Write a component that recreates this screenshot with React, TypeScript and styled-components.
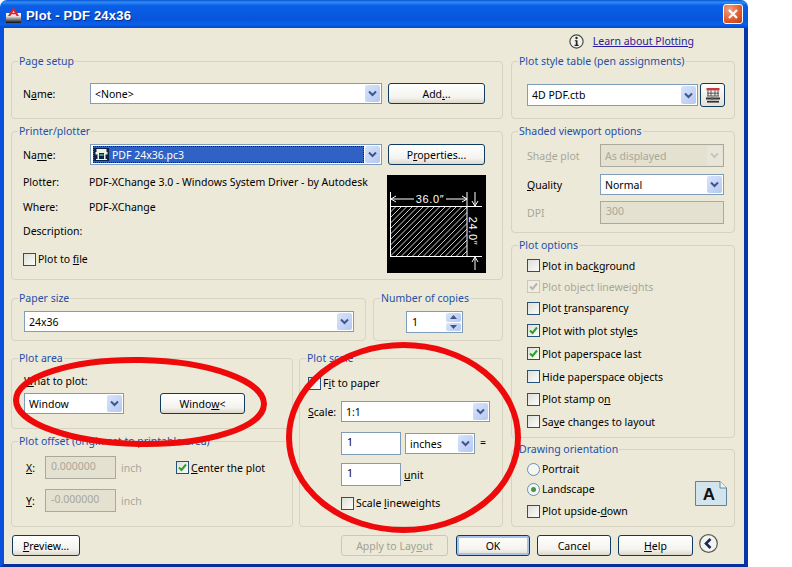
import React from "react";
import styled, { createGlobalStyle } from "styled-components";

const GlobalStyle = createGlobalStyle`
  html, body { margin: 0; padding: 0; background: #fff; }
  body { font-family: "Noto Sans", "Liberation Sans", sans-serif; font-size: 10.5px; color: #000; }
  u { text-underline-offset: 1px; }
`;

const Dialog = styled.div`
  position: relative;
  width: 748px;
  height: 567px;
  display: flex;
  flex-direction: column;
  overflow: hidden;
`;

const TitleBar = styled.div`
  height: 28px;
  flex: none;
  display: flex;
  align-items: center;
  padding: 0 5px 0 6px;
  box-sizing: border-box;
  border-radius: 7px 7px 0 0;
  background: linear-gradient(180deg, #0a56d8 0%, #2f8cf5 8%, #0a5fe6 20%, #0655dc 70%, #0a60ea 88%, #0546c4 100%);
`;

const Title = styled.div`
  flex: 1;
  margin: 3px 0 0 5px;
  font-family: "Liberation Sans", sans-serif;
  font-weight: 700;
  font-size: 13px;
  letter-spacing: 0.2px;
  color: #fff;
  text-shadow: 1px 1px 0 #0a2c8c;
`;

const CloseButton = styled.div`
  width: 20px;
  height: 20px;
  box-sizing: border-box;
  border: 1px solid #fff;
  border-radius: 3px;
  background: radial-gradient(circle at 30% 25%, #f0a080, #dc5a2e 60%, #c03a12);
  display: flex;
  align-items: center;
  justify-content: center;
`;

const Body = styled.div`
  flex: 1;
  display: flex;
  flex-direction: column;
  box-sizing: border-box;
  background: #ece9d8;
  border-left: 4px solid #0a50dc;
  border-right: 4px solid #0836a8;
  border-bottom: 3px solid #06309c;
  padding: 0 9px 0 7px;
`;

const InfoRow = styled.div`
  height: 26px;
  flex: none;
  display: flex;
  align-items: center;
  justify-content: flex-end;
  padding-right: 41px;
  gap: 9px;
`;

const HelpLink = styled.a`
  color: #2a1a9c;
  text-decoration: underline;
`;

const Columns = styled.div`
  height: 473px;
  flex: none;
  display: flex;
  gap: 8px;
`;

const LeftColumn = styled.div`
  width: 492px;
  display: flex;
  flex-direction: column;
`;

const RightColumn = styled.div`
  width: 224px;
  display: flex;
  flex-direction: column;
`;

const Group = styled.fieldset<{ $h: number; $w?: number; $top?: number; $pad?: number }>`
  margin: ${(p) => p.$top ?? 0}px 0 0 0;
  padding: 0 0 0 ${(p) => p.$pad ?? 11}px;
  min-width: 0;
  box-sizing: border-box;
  height: ${(p) => p.$h}px;
  width: ${(p) => (p.$w ? `${p.$w}px` : "auto")};
  flex: none;
  border: 1px solid #d6d3c2;
  border-radius: 4px;
  & > legend {
    margin-left: ${(p) => 6 - (p.$pad ?? 11)}px;
  }
`;

const Legend = styled.legend`
  padding: 0 1px;
  line-height: 14px;
  color: #1f4ea8;
`;

const Row = styled.div<{ $top?: number; $h?: number; $gap?: number; $indent?: number }>`
  display: flex;
  align-items: center;
  margin-top: ${(p) => p.$top ?? 0}px;
  height: ${(p) => (p.$h ? `${p.$h}px` : "auto")};
  gap: ${(p) => p.$gap ?? 0}px;
  padding-left: ${(p) => p.$indent ?? 0}px;
`;

const Label = styled.span<{ $w?: number; $left?: number; $disabled?: boolean }>`
  flex: none;
  width: ${(p) => (p.$w ? `${p.$w}px` : "auto")};
  margin-left: ${(p) => p.$left ?? 0}px;
  color: ${(p) => (p.$disabled ? "#a8a799" : "#000")};
  white-space: nowrap;
`;

const EqualsSign = styled.span`
  flex: none;
  margin: -3px 0 0 1px;
`;

const ComboBox = styled.div<{ $w: number; $h?: number; $disabled?: boolean }>`
  flex: none;
  width: ${(p) => p.$w}px;
  height: ${(p) => p.$h ?? 21}px;
  box-sizing: border-box;
  display: flex;
  align-items: center;
  border: 1px solid ${(p) => (p.$disabled ? "#a9a99c" : "#7f9db9")};
  background: ${(p) => (p.$disabled ? "#e4e1d1" : "#fff")};
  color: ${(p) => (p.$disabled ? "#a8a799" : "#000")};
  padding: 1px 1px 1px 4px;
`;

const ComboText = styled.span`
  flex: 1;
  white-space: nowrap;
  overflow: hidden;
`;

const ComboArrow = styled.div<{ $disabled?: boolean }>`
  width: 15px;
  align-self: stretch;
  flex: none;
  display: flex;
  align-items: center;
  justify-content: center;
  border-radius: 2px;
  background: ${(p) => (p.$disabled ? "#e8e6da" : "linear-gradient(135deg, #d8e4fb, #b4c8f2)")};
`;

const SelectedItem = styled.div`
  flex: 1;
  align-self: stretch;
  margin-left: -2px;
  margin-right: 1px;
  display: flex;
  align-items: center;
  gap: 3px;
  padding-left: 1px;
  color: #fff;
  background: #2f62c4;
  outline: 1px dotted #12203c;
  outline-offset: -1px;
`;

const PushButton = styled.div<{ $w: number; $h?: number; $left?: number; $disabled?: boolean; $default?: boolean }>`
  flex: none;
  width: ${(p) => p.$w}px;
  height: ${(p) => p.$h ?? 21}px;
  margin-left: ${(p) => p.$left ?? 0}px;
  box-sizing: border-box;
  display: flex;
  align-items: center;
  justify-content: center;
  border: 1px solid ${(p) => (p.$disabled ? "#c9c7ba" : "#0f3a62")};
  border-radius: 3px;
  color: ${(p) => (p.$disabled ? "#a1a192" : "#000")};
  background: ${(p) => (p.$disabled ? "#ece9d8" : "linear-gradient(180deg, #fff 0%, #f4f3ee 70%, #dcd8cc 100%)")};
  box-shadow: ${(p) => (p.$default ? "inset 0 0 0 2px #a9c2ec" : "none")};
`;

const TextInput = styled.div<{ $w: number; $h?: number; $disabled?: boolean }>`
  flex: none;
  width: ${(p) => p.$w}px;
  height: ${(p) => p.$h ?? 23}px;
  box-sizing: border-box;
  border: 1px solid ${(p) => (p.$disabled ? "#a9a99c" : "#7f9db9")};
  background: ${(p) => (p.$disabled ? "#e4e1d1" : "#fff")};
  color: ${(p) => (p.$disabled ? "#a8a799" : "#000")};
  padding: 0 0 3px 5px;
  display: flex;
  align-items: center;
`;

const CheckBox = styled.div<{ $disabled?: boolean }>`
  width: 13px;
  height: 13px;
  flex: none;
  box-sizing: border-box;
  border: 1px solid ${(p) => (p.$disabled ? "#cac8bb" : "#24527e")};
  background: ${(p) => (p.$disabled ? "#f0eee3" : "linear-gradient(135deg, #e0e0da, #fbfbf8)")};
  display: flex;
  align-items: center;
  justify-content: center;
`;

const CheckRow = styled.div<{ $h?: number; $top?: number; $disabled?: boolean }>`
  display: flex;
  align-items: center;
  gap: 2px;
  height: ${(p) => p.$h ?? 14}px;
  margin-top: ${(p) => p.$top ?? 0}px;
  color: ${(p) => (p.$disabled ? "#a8a799" : "#000")};
  white-space: nowrap;
`;

const OptionList = styled.div`
  margin-top: 3px;
`;

const RadioDot = styled.div<{ $on?: boolean }>`
  width: 13px;
  height: 13px;
  flex: none;
  box-sizing: border-box;
  border: 1px solid #6f8bab;
  border-radius: 50%;
  background: #f6f6f1;
  display: flex;
  align-items: center;
  justify-content: center;
  &::after {
    content: "";
    display: ${(p) => (p.$on ? "block" : "none")};
    width: 5px;
    height: 5px;
    border-radius: 50%;
    background: #3f9a3f;
  }
`;

const DetailsRow = styled.div`
  display: flex;
  margin-top: 10px;
`;

const Details = styled.div`
  width: 364px;
  flex: none;
`;

const DetailLine = styled.div<{ $h: number }>`
  height: ${(p) => p.$h}px;
  display: flex;
  align-items: center;
`;

const Spinner = styled.div`
  width: 57px;
  height: 22px;
  margin-left: 21px;
  margin-top: 6px;
  box-sizing: border-box;
  border: 1px solid #7f9db9;
  background: #fff;
  display: flex;
  align-items: center;
  padding: 1px 1px 1px 5px;
`;

const SpinButtons = styled.div`
  width: 15px;
  align-self: stretch;
  display: flex;
  flex-direction: column;
  gap: 1px;
`;

const SpinButton = styled.div`
  flex: 1;
  display: flex;
  align-items: center;
  justify-content: center;
  border-radius: 2px;
  background: linear-gradient(135deg, #d8e4fb, #b4c8f2);
`;

const SplitRow = styled.div<{ $top: number; $h: number; $gap: number }>`
  display: flex;
  gap: ${(p) => p.$gap}px;
  margin-top: ${(p) => p.$top}px;
  height: ${(p) => p.$h}px;
  flex: none;
`;

const AreaStack = styled.div`
  width: 282px;
  display: flex;
  flex-direction: column;
  gap: 5px;
`;

const OrientationBody = styled.div`
  position: relative;
`;

const OrientationIcon = styled.svg`
  position: absolute;
  right: 7px;
  top: 22px;
`;

const Footer = styled.div`
  flex: 1;
  display: flex;
  align-items: flex-start;
  padding: 8px 0 0 1px;
`;

const FooterRight = styled.div`
  margin-left: auto;
  margin-right: 17px;
  display: flex;
  gap: 7px;
  align-items: flex-start;
`;

const MoreButton = styled.svg`
  margin: -1px 0 0 -1px;
  flex: none;
`;

const IconButton = styled.div`
  width: 25px;
  height: 24px;
  margin-left: 1px;
  box-sizing: border-box;
  border: 1px solid #0f3a62;
  border-radius: 3px;
  background: linear-gradient(180deg, #fff, #e4e1d6);
  display: flex;
  align-items: center;
  justify-content: center;
`;

const Annotations = styled.svg`
  position: absolute;
  left: 0;
  top: 0;
  pointer-events: none;
`;

const Chevron = ({ disabled }: { disabled?: boolean }) => (
  <svg width="9" height="7" viewBox="0 0 9 7">
    <path d="M1 1.5 L4.5 5 L8 1.5" fill="none" stroke={disabled ? "#c8c6b8" : "#40558c"} strokeWidth="2" />
  </svg>
);

const Combo = ({ w, h, disabled, children }: { w: number; h?: number; disabled?: boolean; children: React.ReactNode }) => (
  <ComboBox $w={w} $h={h} $disabled={disabled}>
    <ComboText>{children}</ComboText>
    <ComboArrow $disabled={disabled}>
      <Chevron disabled={disabled} />
    </ComboArrow>
  </ComboBox>
);

const Tick = ({ disabled }: { disabled?: boolean }) => (
  <svg width="9" height="9" viewBox="0 0 9 9">
    <path d="M1 4.5 L3.5 7 L8 1.5" fill="none" stroke={disabled ? "#b8b7aa" : "#2ba02b"} strokeWidth="2" />
  </svg>
);

const Check = ({ checked, disabled, h, top, children }: { checked?: boolean; disabled?: boolean; h?: number; top?: number; children: React.ReactNode }) => (
  <CheckRow $h={h} $top={top} $disabled={disabled}>
    <CheckBox $disabled={disabled}>{checked && <Tick disabled={disabled} />}</CheckBox>
    <span>{children}</span>
  </CheckRow>
);

const AppIcon = () => (
  <svg width="15" height="16" viewBox="0 0 15 16" style={{ marginTop: 3 }}>
    <defs>
      <linearGradient id="appIconBase" x1="0" y1="0" x2="0" y2="1">
        <stop offset="0" stopColor="#ffffff" />
        <stop offset="0.35" stopColor="#dcdcdc" />
        <stop offset="1" stopColor="#0c0c0c" />
      </linearGradient>
    </defs>
    <rect x="0" y="5" width="15" height="10" fill="url(#appIconBase)" />
    <path d="M2 8 L6.4 0.5 L8.6 0.5 L13 8 L10.6 8 L9.6 6.2 L5.4 6.2 L4.4 8 Z" fill="#e0202a" />
    <path d="M6.3 4.8 L8.7 4.8 L7.5 2.8 Z" fill="#fff" />
  </svg>
);

const InfoIcon = () => (
  <svg width="15" height="15" viewBox="0 0 15 15">
    <circle cx="7.5" cy="7.5" r="6.6" fill="#f2f1ea" stroke="#4a4a48" strokeWidth="1.2" />
    <circle cx="7.5" cy="4" r="1.2" fill="#222" />
    <path d="M5.8 6.2 H8.5 V10.8 H9.6 V12 H5.6 V10.8 H6.8 V7.3 H5.8 Z" fill="#222" />
  </svg>
);

const PrinterIcon = () => (
  <svg width="15" height="13" viewBox="0 0 15 13">
    <rect width="15" height="13" fill="#0c2348" />
    <path d="M2.5 1 H12.5 V4 H2.5 Z M1.5 4 H13.5 V6.5 H11.5 V11 H13 V12 H2 V11 H3.5 V6.5 H1.5 Z" fill="#f0f0e4" />
    <rect x="5" y="5" width="5" height="6" fill="#0c2348" />
    <rect x="5.5" y="6" width="4" height="2" fill="#30a090" />
  </svg>
);

const StyleTableIcon = () => (
  <svg width="16" height="17" viewBox="0 0 16 17">
    <rect x="1.5" y="1" width="13" height="2.4" fill="#c8383c" />
    <path d="M3 3.4 V9 M6 3.4 V9 M10 3.4 V9 M13 3.4 V9 M2 6.2 H14 M2 9 H14" stroke="#555" fill="none" />
    <rect x="1" y="10.5" width="14" height="2" fill="#333" />
    <rect x="2" y="13.8" width="12" height="1.8" fill="#333" />
    <rect x="6" y="10" width="2.4" height="3" fill="#666" />
  </svg>
);

// diagonal hatch of the paper, clipped to the sheet
const hatchLines = Array.from({ length: 24 }, (_, i) => {
  const c = 4 + i * 5.5;
  return <line key={i} x1={c - 50} y1={81} x2={c} y2={31} />;
});

const PaperPreview = () => (
  <svg width="99" height="98" viewBox="0 0 99 98">
    <rect width="99" height="98" fill="#000" />
    <defs>
      <clipPath id="paperClip">
        <rect x="3" y="31" width="77" height="50" />
      </clipPath>
    </defs>
    <g stroke="#fff" strokeWidth="0.8" clipPath="url(#paperClip)">{hatchLines}</g>
    <rect x="3.5" y="31.5" width="76.5" height="50" fill="none" stroke="#fff" />
    <g stroke="#fff" fill="none">
      <path d="M3.5 17 V31 M80 17 V31" />
      <path d="M4 24 H27 M59 24 H80" />
      <path d="M9 21 L4 24 L9 27 M75 21 L80 24 L75 27" />
      <path d="M80 31.5 H95 M80 81.5 H95" />
      <path d="M88 17 V31 M88 82 V95" />
      <path d="M85 26 L88 31 L91 26 M85 87 L88 82 L91 87" />
    </g>
    <text x="43" y="28" fill="#fff" fontSize="11" textAnchor="middle" fontFamily="Liberation Sans, sans-serif" letterSpacing="0.6">36.0″</text>
    <text x="82" y="56" fill="#fff" fontSize="11" textAnchor="middle" fontFamily="Liberation Sans, sans-serif" letterSpacing="0.6" transform="rotate(90 82 56)">24.0″</text>
  </svg>
);

const plotOptions: { text: React.ReactNode; h: number; checked?: boolean; disabled?: boolean }[] = [
  { text: <>Plot in bac<u>k</u>ground</>, h: 21 },
  { text: "Plot object lineweights", h: 21, checked: true, disabled: true },
  { text: <>Plot <u>t</u>ransparency</>, h: 22 },
  { text: <>Plot with plot styl<u>e</u>s</>, h: 23, checked: true },
  { text: "Plot paperspace last", h: 23, checked: true },
  { text: <>Hide paperspace ob<u>j</u>ects</>, h: 23 },
  { text: <>Plot stamp o<u>n</u></>, h: 22 },
  { text: <>Sa<u>v</u>e changes to layout</>, h: 23 },
];

export default function App() {
  return (
    <>
      <GlobalStyle />
      <Dialog>
        <TitleBar>
          <AppIcon />
          <Title>Plot - PDF 24x36</Title>
          <CloseButton>
            <svg width="12" height="12" viewBox="0 0 12 12">
              <path d="M2 2 L10 10 M10 2 L2 10" stroke="#fff" strokeWidth="2.2" />
            </svg>
          </CloseButton>
        </TitleBar>
        <Body>
          <InfoRow>
            <InfoIcon />
            <HelpLink>Learn about Plotting</HelpLink>
          </InfoRow>
          <Columns>
            <LeftColumn>
              <Group $h={65}>
                <Legend>Page setup</Legend>
                <Row $top={15}>
                  <Label $w={67}>N<u>a</u>me:</Label>
                  <Combo w={292}>&lt;None&gt;</Combo>
                  <PushButton $w={97} $left={6}><span>Add<u>.</u>..</span></PushButton>
                </Row>
              </Group>
              <Group $h={156} $top={5}>
                <Legend>Printer/plotter</Legend>
                <Row $top={6}>
                  <Label $w={67}>Na<u>m</u>e:</Label>
                  <ComboBox $w={292}>
                    <SelectedItem>
                      <PrinterIcon />
                      <span>PDF 24x36.pc3</span>
                    </SelectedItem>
                    <ComboArrow>
                      <Chevron />
                    </ComboArrow>
                  </ComboBox>
                  <PushButton $w={97} $left={6}><span>P<u>r</u>operties...</span></PushButton>
                </Row>
                <DetailsRow>
                  <Details>
                    <DetailLine $h={14}>
                      <Label $w={66}>Plotter:</Label>
                      <span>PDF-XChange 3.0 - Windows System Driver - by Autodesk</span>
                    </DetailLine>
                    <DetailLine $h={36}>
                      <Label $w={66}>Where:</Label>
                      <span>PDF-XChange</span>
                    </DetailLine>
                    <DetailLine $h={12}>
                      <Label>Description:</Label>
                    </DetailLine>
                    <Check top={15} h={14}>Plot to <u>f</u>ile</Check>
                  </Details>
                  <PaperPreview />
                </DetailsRow>
              </Group>
              <SplitRow $top={11} $h={50} $gap={7}>
                <Group $h={50} $w={355} $pad={12}>
                  <Legend>Paper size</Legend>
                  <Row $top={6}>
                    <Combo w={330}>24x36</Combo>
                  </Row>
                </Group>
                <Group $h={50} $w={130}>
                  <Legend>Number of copies</Legend>
                  <Spinner>
                    <ComboText>1</ComboText>
                    <SpinButtons>
                      <SpinButton>
                        <svg width="7" height="4" viewBox="0 0 7 4"><path d="M0 4 L3.5 0 L7 4 Z" fill="#40558c" /></svg>
                      </SpinButton>
                      <SpinButton>
                        <svg width="7" height="4" viewBox="0 0 7 4"><path d="M0 0 L3.5 4 L7 0 Z" fill="#40558c" /></svg>
                      </SpinButton>
                    </SpinButtons>
                  </Spinner>
                </Group>
              </SplitRow>
              <SplitRow $top={10} $h={176} $gap={6}>
                <AreaStack>
                  <Group $h={78} $pad={12}>
                    <Legend>Plot area</Legend>
                    <Row $top={9} $h={14}>
                      <Label><u>W</u>hat to plot:</Label>
                    </Row>
                    <Row $top={5} $gap={36}>
                      <Combo w={100}>Window</Combo>
                      <PushButton $w={85}><span>Windo<u>w</u>&lt;</span></PushButton>
                    </Row>
                  </Group>
                  <Group $h={93} $pad={14}>
                    <Legend>Plot offset (origin set to printable area)</Legend>
                    <Row $top={8} $h={23}>
                      <Label $w={19}><u>X</u>:</Label>
                      <TextInput $w={71} $disabled>0.000000</TextInput>
                      <Label $w={55} $left={5} $disabled>inch</Label>
                      <Check checked>
                        <u>C</u>enter the plot
                      </Check>
                    </Row>
                    <Row $top={10} $h={23}>
                      <Label $w={19}><u>Y</u>:</Label>
                      <TextInput $w={71} $disabled>-0.000000</TextInput>
                      <Label $left={5} $disabled>inch</Label>
                    </Row>
                  </Group>
                </AreaStack>
                <Group $h={176} $w={204} $pad={8}>
                  <Legend>Plot scale</Legend>
                  <Check top={11}>F<u>i</u>t to paper</Check>
                  <Row $top={11}>
                    <Label $w={33}><u>S</u>cale:</Label>
                    <Combo w={149}>1:1</Combo>
                  </Row>
                  <Row $top={10} $indent={33} $gap={4}>
                    <TextInput $w={60}>1</TextInput>
                    <Combo w={70}>inches</Combo>
                    <EqualsSign>=</EqualsSign>
                  </Row>
                  <Row $top={8} $indent={33} $gap={3}>
                    <TextInput $w={60}>1</TextInput>
                    <Label><u>u</u>nit</Label>
                  </Row>
                  <Row $top={10} $indent={33}>
                    <Check>Scale <u>l</u>ineweights</Check>
                  </Row>
                </Group>
              </SplitRow>
            </LeftColumn>
            <RightColumn>
              <Group $h={65} $pad={15}>
                <Legend>Plot style table (pen assignments)</Legend>
                <Row $top={15} $gap={1}>
                  <Combo w={171} h={22}>4D PDF.ctb</Combo>
                  <IconButton>
                    <StyleTableIcon />
                  </IconButton>
                </Row>
              </Group>
              <Group $h={109} $top={5} $pad={15}>
                <Legend>Shaded viewport options</Legend>
                <Row $top={6}>
                  <Label $w={73} $disabled>Sha<u>d</u>e plot</Label>
                  <Combo w={124} h={23} disabled>As displayed</Combo>
                </Row>
                <Row $top={7}>
                  <Label $w={73}><u>Q</u>uality</Label>
                  <Combo w={124}>Normal</Combo>
                </Row>
                <Row $top={6}>
                  <Label $w={73} $disabled>DPI</Label>
                  <TextInput $w={124} $disabled>300</TextInput>
                </Row>
              </Group>
              <Group $h={200} $top={5} $pad={15}>
                <Legend>Plot options</Legend>
                <OptionList>
                  {plotOptions.map((o, i) => (
                    <Check key={i} h={o.h} checked={o.checked} disabled={o.disabled}>
                      {o.text}
                    </Check>
                  ))}
                </OptionList>
              </Group>
              <Group $h={85} $top={4} $pad={15}>
                <Legend>Drawing orientation</Legend>
                <OrientationBody>
                  <CheckRow $h={20} $top={3}>
                    <RadioDot />
                    <span>Portrait</span>
                  </CheckRow>
                  <CheckRow $h={20}>
                    <RadioDot $on />
                    <span>Landscape</span>
                  </CheckRow>
                  <CheckRow $h={22} $top={1}>
                    <CheckBox />
                    <span>Plot upside-<u>d</u>own</span>
                  </CheckRow>
                  <OrientationIcon width="32" height="25" viewBox="0 0 32 25">
                    <path d="M0.5 0.5 H25 L31.5 7 V24.5 H0.5 Z" fill="#d4e4ec" stroke="#5c84a0" />
                    <path d="M25 0.5 V7 H31.5" fill="#eef4f8" stroke="#5c84a0" />
                    <text x="14" y="19" fontSize="17" fontWeight="700" textAnchor="middle" fill="#111" fontFamily="Liberation Sans, sans-serif">A</text>
                  </OrientationIcon>
                </OrientationBody>
              </Group>
            </RightColumn>
          </Columns>
          <Footer>
            <PushButton $w={68}><span><u>P</u>review...</span></PushButton>
            <FooterRight>
              <PushButton $w={107} $disabled><span>Apply to Lay<u>o</u>ut</span></PushButton>
              <PushButton $w={74} $left={1} $default>OK</PushButton>
              <PushButton $w={74}>Cancel</PushButton>
              <PushButton $w={75}><span><u>H</u>elp</span></PushButton>
              <MoreButton width="19" height="19" viewBox="0 0 19 19">
                <circle cx="9.5" cy="9.5" r="8.8" fill="#f4f3ee" stroke="#5a5a58" strokeWidth="1.2" />
                <path d="M11.5 5 L7 9.5 L11.5 14" fill="none" stroke="#1a2a5c" strokeWidth="2.6" />
              </MoreButton>
            </FooterRight>
          </Footer>
        </Body>
        <Annotations width="748" height="567" viewBox="0 0 748 567">
          <ellipse cx="140" cy="402" rx="124" ry="42" fill="none" stroke="#ee0a0a" strokeWidth="6" transform="rotate(1 140 402)" />
          <ellipse cx="403.5" cy="437.5" rx="114.5" ry="92.5" fill="none" stroke="#ee0a0a" strokeWidth="6" />
        </Annotations>
      </Dialog>
    </>
  );
}
